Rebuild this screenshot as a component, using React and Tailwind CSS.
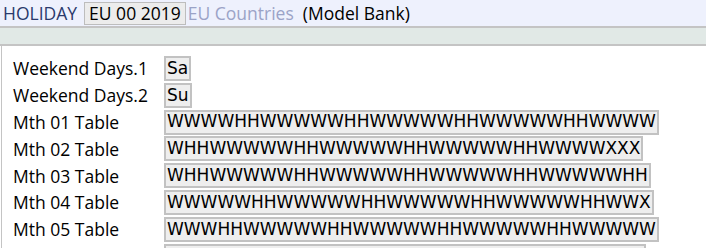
import React from "react";

const rows = [
  { label: "Weekend Days.1", value: "Sa" },
  { label: "Weekend Days.2", value: "Su" },
  { label: "Mth 01 Table", value: "WWWWHHWWWWWHHWWWWWHHWWWWWHHWWWW" },
  { label: "Mth 02 Table", value: "WHHWWWWWHHWWWWWHHWWWWWHHWWWWXXX" },
  { label: "Mth 03 Table", value: "WHHWWWWWHHWWWWWHHWWWWWHHWWWWWHH" },
  { label: "Mth 04 Table", value: "WWWWWHHWWWWWHHWWWWWHHWWWWWHHWWX" },
  { label: "Mth 05 Table", value: "WWWHHWWWWWHHWWWWWHHWWWWWHHWWWWW" },
  { label: "Mth 06 Table", value: "HHWWWWWHHWWWWWHHWWWWWHHWWWWWHHX" },
];

const App = () => {
  return (
    <div className="w-[706px] h-[248px] overflow-hidden bg-white font-['Open_Sans',sans-serif] font-medium">
      <div className="h-[28px] bg-[#eef1fd] flex items-center pl-[3px] text-[17.5px] border-b-2 border-[#c4c4c4]">
        <span className="text-[#2a3a6c]">HOLIDAY</span>
        <span className="ml-[7px] h-[23px] px-[4px] flex items-center bg-[#ececec] border border-[#bdbdbd] text-black">
          EU 00 2019
        </span>
        <span className="ml-[2px] text-[#9ba3c7]">EU Countries</span>
        <span className="ml-[9px] text-black">(Model Bank)</span>
      </div>
      <div className="h-[18px] bg-[#e1e9e6] border-b-2 border-[#c4c4c4]"></div>
      <div className="border-l border-[#c4c4c4] ml-[1px] h-full pt-[10px] pl-[11px] flex flex-col gap-[1.8px]">
        {rows.map((row) => (
          <div key={row.label} className="flex items-center h-[25px]">
            <div className="w-[151px] shrink-0 text-[17.5px] text-black">
              {row.label}
            </div>
            <div className="h-[25px] flex items-center px-[1px] bg-[#eeeeee] border-2 border-[#c2c2c2] text-[17px] font-normal text-black font-['DejaVu_Sans',sans-serif] whitespace-nowrap">
              {row.value}
            </div>
          </div>
        ))}
      </div>
    </div>
  );
};

export default App;
